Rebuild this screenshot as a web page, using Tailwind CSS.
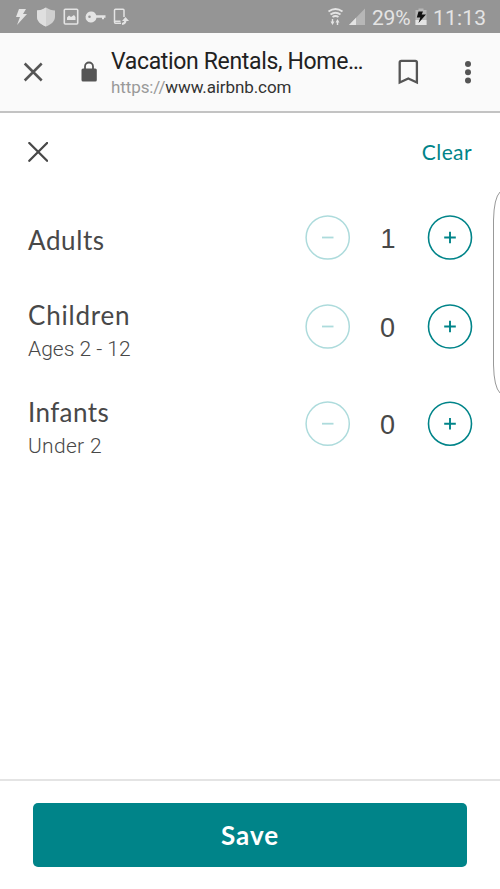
<!DOCTYPE html>
<html lang="en">
<head>
<meta charset="utf-8">
<title>Guests</title>
<script src="https://cdn.jsdelivr.net/npm/@tailwindcss/browser@4"></script>
</head>
<body class="relative flex h-[889px] w-[500px] flex-col overflow-hidden bg-white font-['Lato',sans-serif] text-[#484848]">
<!-- Status bar -->
<div class="flex h-[33px] shrink-0 items-center bg-[#959595] font-['Roboto',sans-serif] text-[#e4e4e4]">
  <svg class="h-[33px] w-[135px]" viewBox="0 0 135 33" fill="none">
    <path d="M19 9h7l-3 5h4L17 25l3-8h-4z" fill="#e4e4e4"/>
    <path d="M46 7.500c3 2 6 3 9 3v6c0 5-4 8-9 10c-5-2-9-5-9-10v-6c3 0 6-1 9-3z" fill="#d0d0d0"/>
    <path d="M46 7.500c-3 2-6 3-9 3v6c0 5 4 8 9 10z" fill="#dfdfdf"/>
    <rect x="64.300" y="9.300" width="13.400" height="14.700" rx="1" stroke="#e4e4e4" stroke-width="1.600"/>
    <path d="M67 20v-2.500l2-2 2 1.500 3-2 1.500 2V20z" fill="#e4e4e4"/>
    <path fill-rule="evenodd" d="M91.500 11.500a5.500 5.500 0 0 1 4.800 3.700H105.500v2.500h-1.500v1.500h-2v-1.500h-5.500a5.500 5.500 0 1 1-5-6.200zM89.500 15.500a1.300 1.300 0 1 0 0 2.600a1.300 1.300 0 0 0 0-2.600z" fill="#e4e4e4"/>
    <path d="M124 17V10.300q0-1-1-1h-7.500q-1 0-1 1V22q0 1.200 1 1.200h5.500M114.500 21.200h6" stroke="#e4e4e4" stroke-width="1.500"/>
    <path d="M122 24q3.500-.3 3.500-4.500" stroke="#e4e4e4" stroke-width="2.200"/><path d="M122 21l3.500-4 3.500 4z" fill="#e4e4e4"/>
  </svg>
  <svg class="ml-[190px] h-[33px] w-[45px] shrink-0" viewBox="325 0 45 33" fill="none">
    <path d="M328.500 11.500q7-5 14 0M330.500 14.500q5-3.500 10 0M332.500 17q3-2 6 0" stroke="#e4e4e4" stroke-width="1.800"/>
    <path d="M330.500 21.500h4l-2 3.500zM331.800 19h1.400v4h-1.400zM335.500 22.500l2-3.500 2 3.500zM336.800 21h1.400v4h-1.400z" fill="#e4e4e4"/>
    <path d="M349 25L365 8.500V25z" fill="#b7b7b7"/><path d="M349 25l7-7.200V25z" fill="#e4e4e4"/>
  </svg>
  <span class="ml-[2px] w-[41px] shrink-0 whitespace-nowrap pt-[3px] text-[21px] leading-[30px] tracking-[-0.2px]">29%</span>
  <svg class="mr-[4px] h-[33px] w-[16px] shrink-0" viewBox="413 0 16 33"><path d="M418.500 8.500h5v1.500h3v15h-11V10h3z" fill="#b7b7b7"/><path d="M415.500 20h11v5h-11z" fill="#e4e4e4"/><path d="M418.500 11.500h4.500l-1.300 3h4.300l-7.500 8.500 1.800-5.500h-3.500z" fill="#111"/></svg>
  <span class="whitespace-nowrap pt-[3px] text-[21px] leading-[30px] tracking-[0.2px]">11:13</span>
</div>
<!-- Browser toolbar -->
<div class="flex h-[80px] shrink-0 items-start border-b-2 border-[#c3c3c3] bg-[#fafafa]">
  <svg class="h-[77px] w-[111px]" viewBox="0 33 111 77" fill="none">
    <path d="M24.700 63.500l17 17M41.700 63.500l-17 17" stroke="#555" stroke-width="2.500"/>
    <rect x="81.500" y="68.500" width="15.300" height="13" rx="1.500" fill="#555"/><path d="M85 69v-2.500a4 4 0 0 1 8 0V69" stroke="#555" stroke-width="1.800"/>
  </svg>
  <div class="flex w-[255px] flex-col whitespace-nowrap pt-[14px] font-['Roboto',sans-serif]">
    <span class="text-[23px] leading-[30px] tracking-[-0.34px] text-[#212121]">Vacation Rentals, Home…</span>
    <span class="-mt-px text-[17px] leading-[23px] tracking-[-0.1px] text-[#333]"><span class="text-[#999]">https://</span>www.airbnb.com</span>
  </div>
  <svg class="h-[77px] w-[134px]" viewBox="366 33 134 77" fill="none">
    <path d="M399.700 82.500V62.500q0-1.600 1.600-1.600h14q1.600 0 1.600 1.600V82.500l-8.600-4z" stroke="#555" stroke-width="2.300"/>
    <g fill="#555"><circle cx="468" cy="64" r="3"/><circle cx="468" cy="72.300" r="3"/><circle cx="468" cy="80.500" r="3"/></g>
  </svg>
</div>
<!-- Guest picker -->
<div class="flex h-[80px] shrink-0 items-center justify-between px-[28px] pb-[2px]">
  <svg class="h-5 w-5" viewBox="0 0 20 20" fill="none" stroke="#484848" stroke-width="2.300" stroke-linecap="round"><path d="M1.300 1l17.800 17.800M19.100 1L1.300 18.800"/></svg>
  <span class="text-[21px] leading-[30px] tracking-[0.4px] text-[#008489]">Clear</span>
</div>
<div class="flex h-[89px] shrink-0 items-center px-[28px]">
  <div class="w-[277px] shrink-0 pt-[4px] text-[26px] leading-[32px] tracking-[0.6px]">Adults</div>
  <svg class="h-[46px] w-[46px] shrink-0" viewBox="0 0 46 46" fill="none" stroke="#addbdc" stroke-width="1.500"><circle cx="22.700" cy="22.500" r="21.600"/><path d="M17 22.500h11.500" stroke-width="1.800"/></svg>
  <span class="w-[74px] shrink-0 pt-[3px] text-center font-['Liberation_Sans',sans-serif] text-[27px] leading-8">1</span>
  <svg class="h-[46px] w-[46px] shrink-0 overflow-visible" viewBox="0 0 46 46" fill="none" stroke="#008489" stroke-width="1.600"><circle cx="25" cy="22.500" r="21.500"/><path d="M19.200 22.500h11.600M25 16.700v11.600" stroke-width="1.900"/></svg>
</div>
<div class="flex h-[97px] shrink-0 items-start px-[28px] pt-[22px]">
  <div class="-mt-[5px] w-[277px] shrink-0"><div class="text-[26px] leading-[32px] tracking-[0.8px]">Children</div><div class="mt-[4px] font-['Roboto',sans-serif] text-[21px] font-light leading-[28px]">Ages 2 - 12</div></div>
  <svg class="h-[46px] w-[46px] shrink-0" viewBox="0 0 46 46" fill="none" stroke="#addbdc" stroke-width="1.500"><circle cx="22.700" cy="22.500" r="21.600"/><path d="M17 22.500h11.500" stroke-width="1.800"/></svg>
  <span class="w-[73px] shrink-0 pt-[8px] text-center font-['Liberation_Sans',sans-serif] text-[27px] leading-8">0</span>
  <svg class="ml-px h-[46px] w-[46px] shrink-0 overflow-visible" viewBox="0 0 46 46" fill="none" stroke="#008489" stroke-width="1.600"><circle cx="25" cy="22.500" r="21.500"/><path d="M19.200 22.500h11.600M25 16.700v11.600" stroke-width="1.900"/></svg>
</div>
<div class="flex h-[97px] shrink-0 items-start px-[28px] pt-[22px]">
  <div class="-mt-[5px] w-[277px] shrink-0"><div class="text-[26px] leading-[32px] tracking-[0.4px]">Infants</div><div class="mt-[4px] font-['Roboto',sans-serif] text-[21px] font-light leading-[28px] tracking-[0.3px]">Under 2</div></div>
  <svg class="h-[46px] w-[46px] shrink-0" viewBox="0 0 46 46" fill="none" stroke="#addbdc" stroke-width="1.500"><circle cx="22.700" cy="22.700" r="21.600"/><path d="M17 22.700h11.500" stroke-width="1.800"/></svg>
  <span class="w-[73px] shrink-0 pt-[8px] text-center font-['Liberation_Sans',sans-serif] text-[27px] leading-8">0</span>
  <svg class="ml-px h-[46px] w-[46px] shrink-0 overflow-visible" viewBox="0 0 46 46" fill="none" stroke="#008489" stroke-width="1.600"><circle cx="25" cy="22.700" r="21.500"/><path d="M19.200 22.700h11.600M25 16.900v11.600" stroke-width="1.900"/></svg>
</div>
<!-- Footer -->
<div class="mt-auto h-[110px] shrink-0 border-t-2 border-[#e4e4e4] px-[33px] pt-[22px]">
  <button class="flex h-[64px] w-[434px] items-center justify-center rounded-[5px] bg-[#008489] pt-px text-[26px] font-bold tracking-[1px] text-white">Save</button>
</div>
<!-- Edge panel handle -->
<svg class="absolute top-[188px] right-0 h-[208px] w-[10px]" viewBox="490 188 10 208" fill="none" stroke="#999" stroke-width="1"><path d="M500 192q-6 6-6.500 28V365q.5 22 6.500 28"/></svg>
</body>
</html>
